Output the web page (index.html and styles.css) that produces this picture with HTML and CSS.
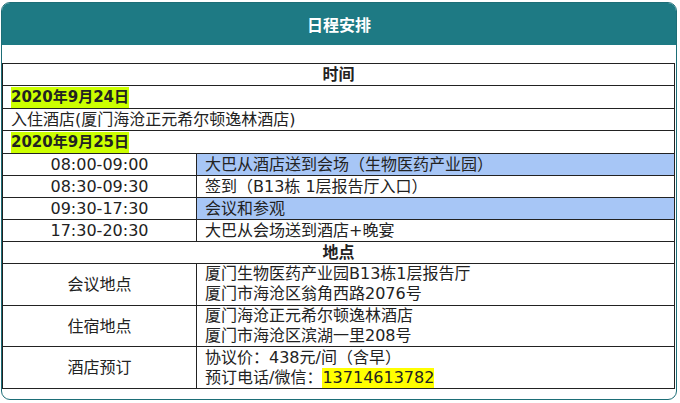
FILE: index.html
```html
<!DOCTYPE html>
<html lang="zh-CN">
<head>
<meta charset="utf-8">
<title>日程安排</title>
<link rel="stylesheet" href="styles.css">
</head>
<body>
<div class="box">
  <div class="head">日程安排</div>
  <div class="body">
    <table class="sched">
      <colgroup><col class="c1"><col class="c2"></colgroup>
      <tr class="r1"><td colspan="2" class="sec">时间</td></tr>
      <tr class="r1"><td colspan="2"><span class="date">2020年9月24日</span></td></tr>
      <tr class="r1"><td colspan="2">入住酒店(厦门海沧正元希尔顿逸林酒店)</td></tr>
      <tr class="r1"><td colspan="2"><span class="date">2020年9月25日</span></td></tr>
      <tr class="r1"><td class="ctr">08:00-09:00</td><td class="blue">大巴从酒店送到会场（生物医药产业园）</td></tr>
      <tr class="r1"><td class="ctr">08:30-09:30</td><td>签到（B13栋 1层报告厅入口）</td></tr>
      <tr class="r1"><td class="ctr">09:30-17:30</td><td class="blue">会议和参观</td></tr>
      <tr class="r1"><td class="ctr">17:30-20:30</td><td>大巴从会场送到酒店+晚宴</td></tr>
      <tr class="r1"><td colspan="2" class="sec">地点</td></tr>
      <tr class="r2"><td class="ctr">会议地点</td><td><div class="ln">厦门生物医药产业园B13栋1层报告厅</div><div class="ln">厦门市海沧区翁角西路2076号</div></td></tr>
      <tr class="r2"><td class="ctr">住宿地点</td><td><div class="ln">厦门海沧正元希尔顿逸林酒店</div><div class="ln">厦门市海沧区滨湖一里208号</div></td></tr>
      <tr class="r2"><td class="ctr">酒店预订</td><td><div class="ln">协议价：438元/间（含早）</div><div class="ln">预订电话/微信：<span class="phone">13714613782</span></div></td></tr>
    </table>
  </div>
</div>
</body>
</html>
```
FILE: styles.css
```css
* { box-sizing: border-box; }
html, body { margin: 0; padding: 0; background: #fff; }
body {
  font-family: "Noto Sans CJK SC", "Noto Sans", sans-serif;
  color: #222;
}
.box {
  margin: 2px 0 0 1px;
  width: 676px;
  height: 398px;
  border: 1px solid #1d6e77;
  border-radius: 9px;
  overflow: hidden;
}
.head {
  height: 42px;
  background: #1e7a84;
  color: #fff;
  font-weight: bold;
  font-size: 16px;
  line-height: 42px;
  text-align: center;
}
.body { padding-top: 18px; }
.sched {
  border-collapse: collapse;
  width: 673px;
  table-layout: fixed;
  font-family: "DejaVu Sans", "Noto Sans CJK SC", sans-serif;
  font-size: 16px;
  line-height: 21px;
}
.c1 { width: 194px; }
.sched td {
  border: 1px solid #222;
  padding: 0 8px;
  vertical-align: middle;
  white-space: nowrap;
}
.r1 td { height: 21.7px; }
.r2 td { height: 41.7px; }
.ln { height: 20px; line-height: 20px; }
.sec { text-align: center; font-weight: bold; }
.ctr { text-align: center; }
.blue { background: #a7c6f6; }
.date {
  display: inline-block;
  background: #ccff00;
  font-weight: bold;
  font-size: 15px;
  line-height: 21px;
}
.phone {
  display: inline-block;
  background: #ffff00;
  line-height: 20px;
}
```
